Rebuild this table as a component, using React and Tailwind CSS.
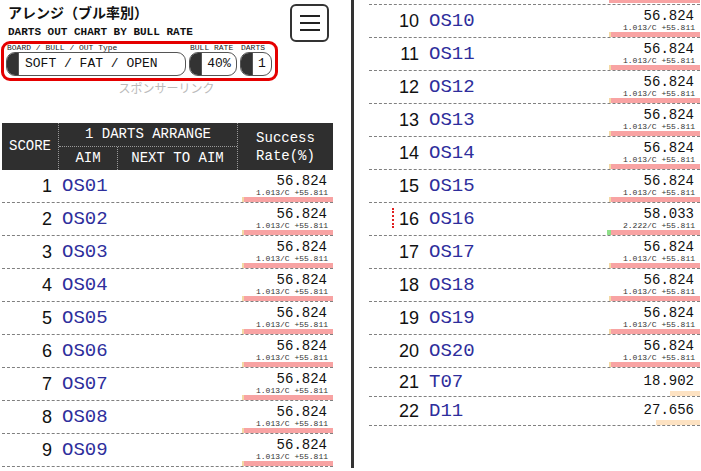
import React from 'react'

const MONO = "font-['Liberation_Mono','Courier_New',monospace]"

const rows = [
    ...Array.from({ length: 20 }, (_, i) => ({
        score: i + 1,
        aim: 'OS' + String(i + 1).padStart(2, '0'),
        rate: i === 15 ? '58.033' : '56.824',
        sub: i === 15 ? '2.222/C +55.811' : '1.013/C +55.811',
        first: i === 15 ? 2.222 : 1.013,
        rest: 55.811,
        firstColor: i === 15 ? '#8fe08a' : '#f3d9a4',
        marker: i === 15,
    })),
    { score: 21, aim: 'T07', rate: '18.902', single: 18.902 },
    { score: 22, aim: 'D11', rate: '27.656', single: 27.656 },
]

const SCALE = 1.6

const Bar = ({ row }) => {
    if (row.single) {
        return <div className="h-[5px] bg-[#fde2c2]" style={{ width: row.single * SCALE }} />
    }
    return (
        <div className="flex h-[5px]">
            <div style={{ width: Math.max(2, row.first * SCALE), background: row.firstColor }} />
            <div className="bg-[#f8a3a3]" style={{ width: row.rest * SCALE }} />
        </div>
    )
}

const Row = ({ row }) => {
    const short = !!row.single
    return (
        <div className={`relative flex border-b border-dashed border-[#808080] ${short ? 'h-[29px]' : 'h-[33px]'}`}>
            {row.marker && <div className="absolute left-[23px] top-[5px] h-[20px] border-l-2 border-dotted border-[#e02020]" />}
            <div className="w-[57px] flex items-center justify-end pr-[7px] font-['Liberation_Sans',Arial,sans-serif] text-[18px] text-[#111]">
                {row.score}
            </div>
            <div className={`flex items-center pl-[3px] ${MONO} text-[19px] text-[#2e2e9c]`}>{row.aim}</div>
            <div className="flex-1 flex flex-col items-end">
                <div className={`${short ? 'pt-[5px]' : 'pt-[3px]'} pr-[6px] ${MONO} text-[14px] leading-[16px] text-[#111]`}>{row.rate}</div>
                {!short && <div className={`pr-[5px] ${MONO} text-[8px] leading-[8px] text-[#333]`}>{row.sub}</div>}
                <div className="mt-auto">
                    <Bar row={row} />
                </div>
            </div>
        </div>
    )
}

const Pill = ({ children, className = '' }) => (
    <div className="h-[24px] flex border-[1.5px] border-[#555] rounded-[9px] overflow-hidden bg-white">
        <div className="w-[11px] bg-[#333] shrink-0" />
        <div className={`flex-1 flex items-center border-l border-[#555] ${MONO} text-[13px] text-[#111] ${className}`}>
            {children}
        </div>
    </div>
)

const Label = ({ children }) => (
    <div className={`pl-[1px] ${MONO} text-[8px] leading-[8px] text-[#222]`}>{children}</div>
)

const Header = () => (
    <div className={`flex bg-[#2f2f2f] text-white ${MONO} text-[14px] h-[47px]`}>
        <div className="w-[57px] flex items-center justify-center border-r border-dotted border-[#999]">SCORE</div>
        <div className="w-[179px] flex flex-col border-r border-dotted border-[#999]">
            <div className="h-[24px] flex items-center justify-center border-b border-dotted border-[#999]">1 DARTS ARRANGE</div>
            <div className="flex-1 flex">
                <div className="w-[59px] flex items-center justify-center border-r border-dotted border-[#999]">AIM</div>
                <div className="flex-1 flex items-center justify-center">NEXT TO AIM</div>
            </div>
        </div>
        <div className="flex-1 flex flex-col items-center justify-center leading-[18px]">
            <div>Success</div>
            <div>Rate(%)</div>
        </div>
    </div>
)

const App = () => {
    const left = rows.slice(0, 9)
    const right = rows.slice(9)
    return (
        <div className="w-[701px] h-[471px] overflow-hidden bg-white flex">
            <div className="w-[351px] shrink-0">
                <div className="w-[333px] h-[41px] flex justify-between">
                    <div className="pl-[8px]">
                        <div className="mt-[2px] text-[14px] leading-[20px] font-bold text-[#111] font-['Noto_Sans_CJK_JP',sans-serif]">
                            アレンジ（ブル率別）
                        </div>
                        <div className={`mt-[4px] text-[11px] leading-[12px] font-bold text-[#111] ${MONO}`}>
                            DARTS OUT CHART BY BULL RATE
                        </div>
                    </div>
                    <div className="mt-[4px] mr-[4px] w-[39px] h-[38px] border-2 border-[#333] rounded-[6px] flex flex-col items-center justify-center gap-[5px]">
                        <div className="w-[20px] h-[2px] bg-[#222]" />
                        <div className="w-[20px] h-[2px] bg-[#222]" />
                        <div className="w-[20px] h-[2px] bg-[#222]" />
                    </div>
                </div>
                <div className="ml-[1px] w-[277px] h-[40px] border-[3px] border-[#e50000] rounded-[9px] flex gap-[3px] pl-[2px]">
                    <div className="w-[180px]">
                        <Label>BOARD / BULL / OUT Type</Label>
                        <Pill className="pl-[6px]">SOFT / FAT / OPEN</Pill>
                    </div>
                    <div className="w-[48px]">
                        <Label>BULL RATE</Label>
                        <Pill className="justify-center">40%</Pill>
                    </div>
                    <div className="w-[32px]">
                        <Label>DARTS</Label>
                        <Pill className="justify-center">1</Pill>
                    </div>
                </div>
                <div className="w-[333px] text-center text-[12px] leading-[14px] text-[#bbb] font-['Noto_Sans_CJK_JP',sans-serif]">
                    スポンサーリンク
                </div>
                <div className="ml-[2px] mt-[28px] w-[331px]">
                    <Header />
                    {left.map((r) => (
                        <Row key={r.score} row={r} />
                    ))}
                </div>
            </div>
            <div className="w-[3px] h-[468px] bg-[#333] shrink-0" />
            <div className="pl-[15px] w-[347px] shrink-0">
                <div className="w-[331px]">
                    <div className="h-[5px] flex justify-end border-b border-dashed border-[#808080]">
                        <div className="h-[3px] w-[91px] bg-[#f8a3a3]" />
                    </div>
                    {right.map((r) => (
                        <Row key={r.score} row={r} />
                    ))}
                </div>
            </div>
        </div>
    )
}

export default App
